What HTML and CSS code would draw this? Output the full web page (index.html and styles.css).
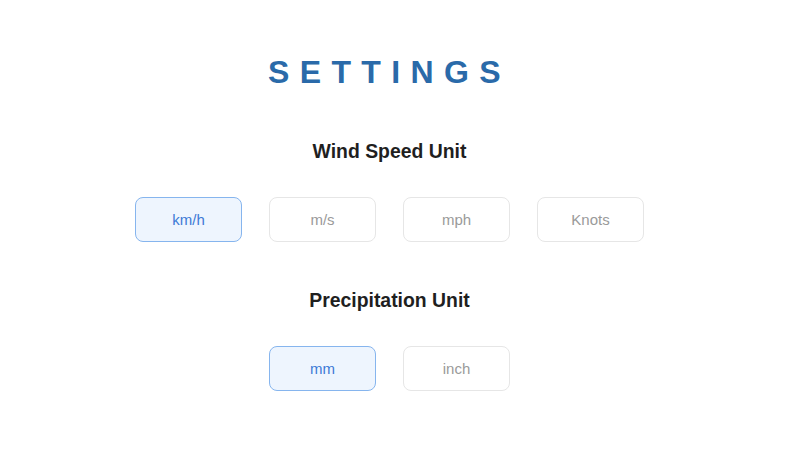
FILE: index.html
```html
<!DOCTYPE html>
<html>
<head>
<meta charset="utf-8">
<link rel="stylesheet" href="styles.css">
</head>
<body>
<div class="page">
  <h1 class="title">SETTINGS</h1>
  <section class="group">
    <h2 class="label">Wind Speed Unit</h2>
    <div class="options">
      <button class="opt active">km/h</button>
      <button class="opt">m/s</button>
      <button class="opt">mph</button>
      <button class="opt">Knots</button>
    </div>
  </section>
  <section class="group">
    <h2 class="label">Precipitation Unit</h2>
    <div class="options">
      <button class="opt active">mm</button>
      <button class="opt">inch</button>
    </div>
  </section>
</div>
</body>
</html>
```
FILE: styles.css
```css
html, body {
  margin: 0;
  padding: 0;
  background: #ffffff;
  font-family: "Liberation Sans", Arial, sans-serif;
}
.page {
  width: 779px;
  padding-top: 52px;
  display: flex;
  flex-direction: column;
  align-items: center;
}
.title {
  margin: 0;
  font-size: 32px;
  line-height: 40px;
  font-weight: bold;
  letter-spacing: 10.4px;
  color: #2a6aa9;
}
.group {
  display: flex;
  flex-direction: column;
  align-items: center;
  margin-top: 47px;
}
.group + .group {
  margin-top: 46px;
}
.label {
  margin: 0;
  font-size: 19.4px;
  line-height: 24px;
  font-weight: bold;
  color: #1f1f1f;
}
.options {
  margin-top: 34px;
  display: flex;
  gap: 27px;
}
.opt {
  box-sizing: border-box;
  width: 107px;
  height: 45px;
  border: 1px solid #e6e6e6;
  border-radius: 8px;
  background: #ffffff;
  font-family: "Liberation Sans", Arial, sans-serif;
  font-size: 15px;
  color: #9a9a9a;
  padding: 0;
}
.opt.active {
  background: #eef5fe;
  border-color: #86b5ee;
  color: #3d7ad6;
}
```
